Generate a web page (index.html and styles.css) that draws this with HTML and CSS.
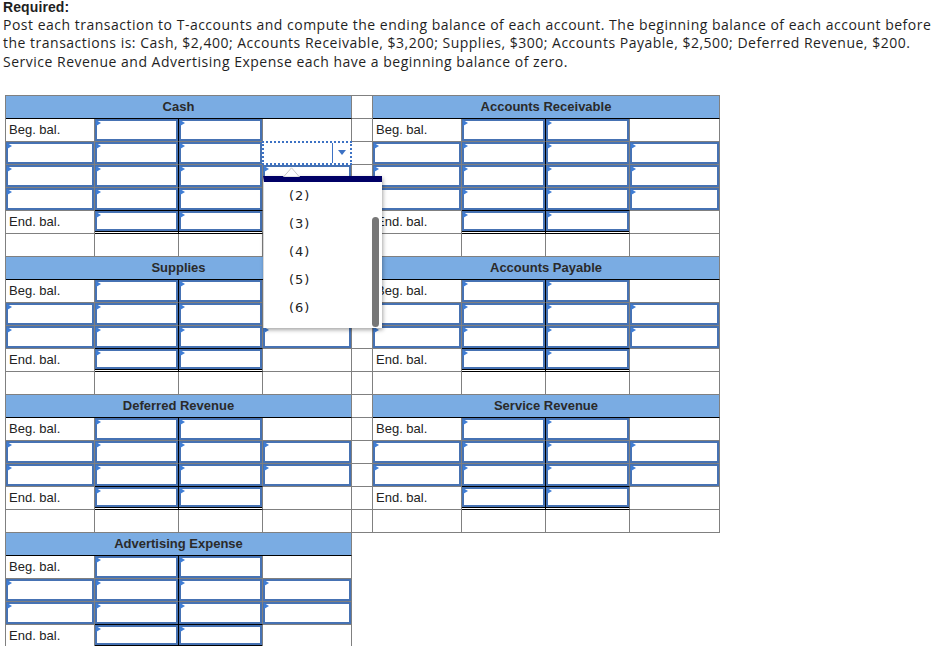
FILE: index.html
```html
<!DOCTYPE html>
<html>
<head>
<meta charset="utf-8">
<link rel="stylesheet" href="styles.css">
</head>
<body>
<div class="req">
  <div class="ln first"><b>Required:</b></div>
  <div class="ln">Post each transaction to T-accounts and compute the ending balance of each account. The beginning balance of each account before</div>
  <div class="ln">the transactions is: Cash, $2,400; Accounts Receivable, $3,200; Supplies, $300; Accounts Payable, $2,500; Deferred Revenue, $200.</div>
  <div class="ln">Service Revenue and Advertising Expense each have a beginning balance of zero.</div>
</div>

<div class="tgrid">
  <!-- Cash / Accounts Receivable -->
  <div class="c hd">Cash</div><div class="c sp"></div><div class="c hd">Accounts Receivable</div>

  <div class="c lb">Beg. bal.</div><div class="c tl"><div class="in"></div></div><div class="c"><div class="in"></div></div><div class="c"></div>
  <div class="c sp"></div>
  <div class="c lb">Beg. bal.</div><div class="c tl"><div class="in"></div></div><div class="c"><div class="in"></div></div><div class="c"></div>

  <div class="c"><div class="in"></div></div><div class="c tl"><div class="in"></div></div><div class="c"><div class="in"></div></div>
  <div class="c dd">
    <div class="sel"><div class="field"></div><div class="arrow"></div></div>
    <div class="popup">
      <svg class="caret" width="17" height="10" viewBox="0 0 17 10"><polygon points="0.5,10 8.5,0.8 16.5,10" fill="#fff" stroke="#c8c8c8" stroke-width="1"/></svg>
      <div class="opt">(2)</div>
      <div class="opt">(3)</div>
      <div class="opt">(4)</div>
      <div class="opt">(5)</div>
      <div class="opt">(6)</div>
      <div class="thumb"></div>
    </div>
  </div>
  <div class="c sp"></div>
  <div class="c"><div class="in"></div></div><div class="c tl"><div class="in"></div></div><div class="c"><div class="in"></div></div><div class="c"><div class="in"></div></div>

  <div class="c"><div class="in"></div></div><div class="c tl"><div class="in"></div></div><div class="c"><div class="in"></div></div><div class="c"><div class="in"></div></div>
  <div class="c sp"></div>
  <div class="c"><div class="in"></div></div><div class="c tl"><div class="in"></div></div><div class="c"><div class="in"></div></div><div class="c"><div class="in"></div></div>

  <div class="c"><div class="in"></div></div><div class="c tl pre"><div class="in"></div></div><div class="c pre"><div class="in"></div></div><div class="c"><div class="in"></div></div>
  <div class="c sp"></div>
  <div class="c"><div class="in"></div></div><div class="c tl pre"><div class="in"></div></div><div class="c pre"><div class="in"></div></div><div class="c"><div class="in"></div></div>

  <div class="c lb">End. bal.</div><div class="c tl end"><div class="in"></div></div><div class="c end"><div class="in"></div></div><div class="c"></div>
  <div class="c sp"></div>
  <div class="c lb">End. bal.</div><div class="c tl end"><div class="in"></div></div><div class="c end"><div class="in"></div></div><div class="c"></div>

  <div class="c"></div><div class="c"></div><div class="c"></div><div class="c"></div>
  <div class="c sp"></div>
  <div class="c"></div><div class="c"></div><div class="c"></div><div class="c"></div>

  <!-- Supplies / Accounts Payable -->
  <div class="c hd">Supplies</div><div class="c sp"></div><div class="c hd">Accounts Payable</div>

  <div class="c lb">Beg. bal.</div><div class="c tl"><div class="in"></div></div><div class="c"><div class="in"></div></div><div class="c"></div>
  <div class="c sp"></div>
  <div class="c lb">Beg. bal.</div><div class="c tl"><div class="in"></div></div><div class="c"><div class="in"></div></div><div class="c"></div>

  <div class="c"><div class="in"></div></div><div class="c tl"><div class="in"></div></div><div class="c"><div class="in"></div></div><div class="c"><div class="in"></div></div>
  <div class="c sp"></div>
  <div class="c"><div class="in"></div></div><div class="c tl"><div class="in"></div></div><div class="c"><div class="in"></div></div><div class="c"><div class="in"></div></div>

  <div class="c"><div class="in"></div></div><div class="c tl pre"><div class="in"></div></div><div class="c pre"><div class="in"></div></div><div class="c"><div class="in"></div></div>
  <div class="c sp"></div>
  <div class="c"><div class="in"></div></div><div class="c tl pre"><div class="in"></div></div><div class="c pre"><div class="in"></div></div><div class="c"><div class="in"></div></div>

  <div class="c lb">End. bal.</div><div class="c tl end"><div class="in"></div></div><div class="c end"><div class="in"></div></div><div class="c"></div>
  <div class="c sp"></div>
  <div class="c lb">End. bal.</div><div class="c tl end"><div class="in"></div></div><div class="c end"><div class="in"></div></div><div class="c"></div>

  <div class="c"></div><div class="c"></div><div class="c"></div><div class="c"></div>
  <div class="c sp"></div>
  <div class="c"></div><div class="c"></div><div class="c"></div><div class="c"></div>

  <!-- Deferred Revenue / Service Revenue -->
  <div class="c hd">Deferred Revenue</div><div class="c sp"></div><div class="c hd">Service Revenue</div>

  <div class="c lb">Beg. bal.</div><div class="c tl"><div class="in"></div></div><div class="c"><div class="in"></div></div><div class="c"></div>
  <div class="c sp"></div>
  <div class="c lb">Beg. bal.</div><div class="c tl"><div class="in"></div></div><div class="c"><div class="in"></div></div><div class="c"></div>

  <div class="c"><div class="in"></div></div><div class="c tl"><div class="in"></div></div><div class="c"><div class="in"></div></div><div class="c"><div class="in"></div></div>
  <div class="c sp"></div>
  <div class="c"><div class="in"></div></div><div class="c tl"><div class="in"></div></div><div class="c"><div class="in"></div></div><div class="c"><div class="in"></div></div>

  <div class="c"><div class="in"></div></div><div class="c tl pre"><div class="in"></div></div><div class="c pre"><div class="in"></div></div><div class="c"><div class="in"></div></div>
  <div class="c sp"></div>
  <div class="c"><div class="in"></div></div><div class="c tl pre"><div class="in"></div></div><div class="c pre"><div class="in"></div></div><div class="c"><div class="in"></div></div>

  <div class="c lb">End. bal.</div><div class="c tl end"><div class="in"></div></div><div class="c end"><div class="in"></div></div><div class="c"></div>
  <div class="c sp"></div>
  <div class="c lb">End. bal.</div><div class="c tl end"><div class="in"></div></div><div class="c end"><div class="in"></div></div><div class="c"></div>

  <div class="c"></div><div class="c"></div><div class="c"></div><div class="c"></div>
  <div class="c sp"></div>
  <div class="c"></div><div class="c"></div><div class="c"></div><div class="c"></div>

  <!-- Advertising Expense -->
  <div class="c hd">Advertising Expense</div><div class="void"></div>

  <div class="c lb">Beg. bal.</div><div class="c tl"><div class="in"></div></div><div class="c"><div class="in"></div></div><div class="c"></div>
  <div class="void"></div>

  <div class="c"><div class="in"></div></div><div class="c tl"><div class="in"></div></div><div class="c"><div class="in"></div></div><div class="c"><div class="in"></div></div>
  <div class="void"></div>

  <div class="c"><div class="in"></div></div><div class="c tl pre"><div class="in"></div></div><div class="c pre"><div class="in"></div></div><div class="c"><div class="in"></div></div>
  <div class="void"></div>

  <div class="c lb">End. bal.</div><div class="c tl end"><div class="in"></div></div><div class="c end"><div class="in"></div></div><div class="c"></div>
  <div class="void"></div>
</div>
</body>
</html>
```

FILE: styles.css
```css
html, body {
  margin: 0;
  padding: 0;
  background: #fff;
}

body {
  width: 944px;
  overflow: hidden;
}

.req {
  margin: 0 0 0 3px;
  font-family: "Open Sans", "Liberation Sans", sans-serif;
  font-size: 14px;
  letter-spacing: 0.5px;
  line-height: 18.5px;
  color: #1f1f1f;
}

.req .ln {
  white-space: nowrap;
}

.req .first {
  font-family: "Liberation Sans", Arial, sans-serif;
  line-height: 15.6px;
  letter-spacing: 0.1px;
}

.req b {
  font-weight: 700;
}

.tgrid {
  margin: 23.9px 0 0 5px;
  display: grid;
  grid-template-columns: 89px 84px 84px 89px 21px 89px 84px 84px 90px;
  grid-auto-rows: 23px;
  width: 715px;
  border-left: 1px solid #808080;
  border-top: 1px solid #808080;
  box-sizing: border-box;
  font-family: "Liberation Sans", Arial, sans-serif;
  font-size: 13px;
  color: #222;
}

.c {
  box-sizing: border-box;
  border-right: 1px solid #808080;
  border-bottom: 1px solid #808080;
  position: relative;
  background: #fff;
}

.hd {
  grid-column: span 4;
  background: #7aace3;
  border-bottom-color: #000;
  font-weight: 700;
  color: #2a2a2a;
  display: flex;
  align-items: center;
  justify-content: center;
  padding-bottom: 1px;
}

.void {
  grid-column: span 5;
}

.lb {
  display: flex;
  align-items: center;
  padding-left: 3px;
  padding-bottom: 1px;
}

.tl {
  border-right-color: #000;
}

.pre {
  border-bottom-color: #000;
}

.end {
  border-bottom-color: #000;
}

.in {
  box-sizing: border-box;
  height: 100%;
  border: 2px solid #4672b3;
  background: #fff;
  position: relative;
}

.in::before {
  content: "";
  position: absolute;
  left: -1px;
  top: -1px;
  width: 0;
  height: 0;
  border-left: 5px solid #3f7dd4;
  border-top: 3px solid transparent;
  border-bottom: 3px solid transparent;
}

.end .in {
  height: 20px;
  box-shadow: 0 1px 0 #000;
}

/* dropdown */
.dd {
  z-index: 5;
}

.sel {
  box-sizing: border-box;
  margin: -1px;
  height: calc(100% + 2px);
  border: 2px dotted #3d72c4;
  display: flex;
  background: #fff;
}

.sel .field {
  width: 68px;
  border-right: 1px solid #3d72c4;
}

.sel .arrow {
  flex: 1;
  display: flex;
  align-items: center;
  justify-content: center;
  padding-bottom: 1px;
}

.sel .arrow::after {
  content: "";
  width: 0;
  height: 0;
  border-top: 5px solid #3d72c4;
  border-left: 4.5px solid transparent;
  border-right: 4.5px solid transparent;
}

.popup {
  position: absolute;
  left: 0;
  top: 34px;
  width: 119px;
  height: 152px;
  box-sizing: border-box;
  background: #fff;
  border-top: 6px solid #000066;
  border-left: 1px solid #d8d8d8;
  box-shadow: 1px 2px 4px rgba(0, 0, 0, 0.35);
  font-family: "DejaVu Sans", Verdana, sans-serif;
  font-size: 13px;
  letter-spacing: 1px;
  color: #222;
}

.caret {
  position: absolute;
  left: 19px;
  top: -15px;
  display: block;
}

.opt {
  height: 28px;
  line-height: 28px;
  padding-left: 25px;
}

.thumb {
  position: absolute;
  right: 3px;
  top: 35px;
  width: 7px;
  height: 110px;
  border-radius: 4px;
  background: #777;
}
```
